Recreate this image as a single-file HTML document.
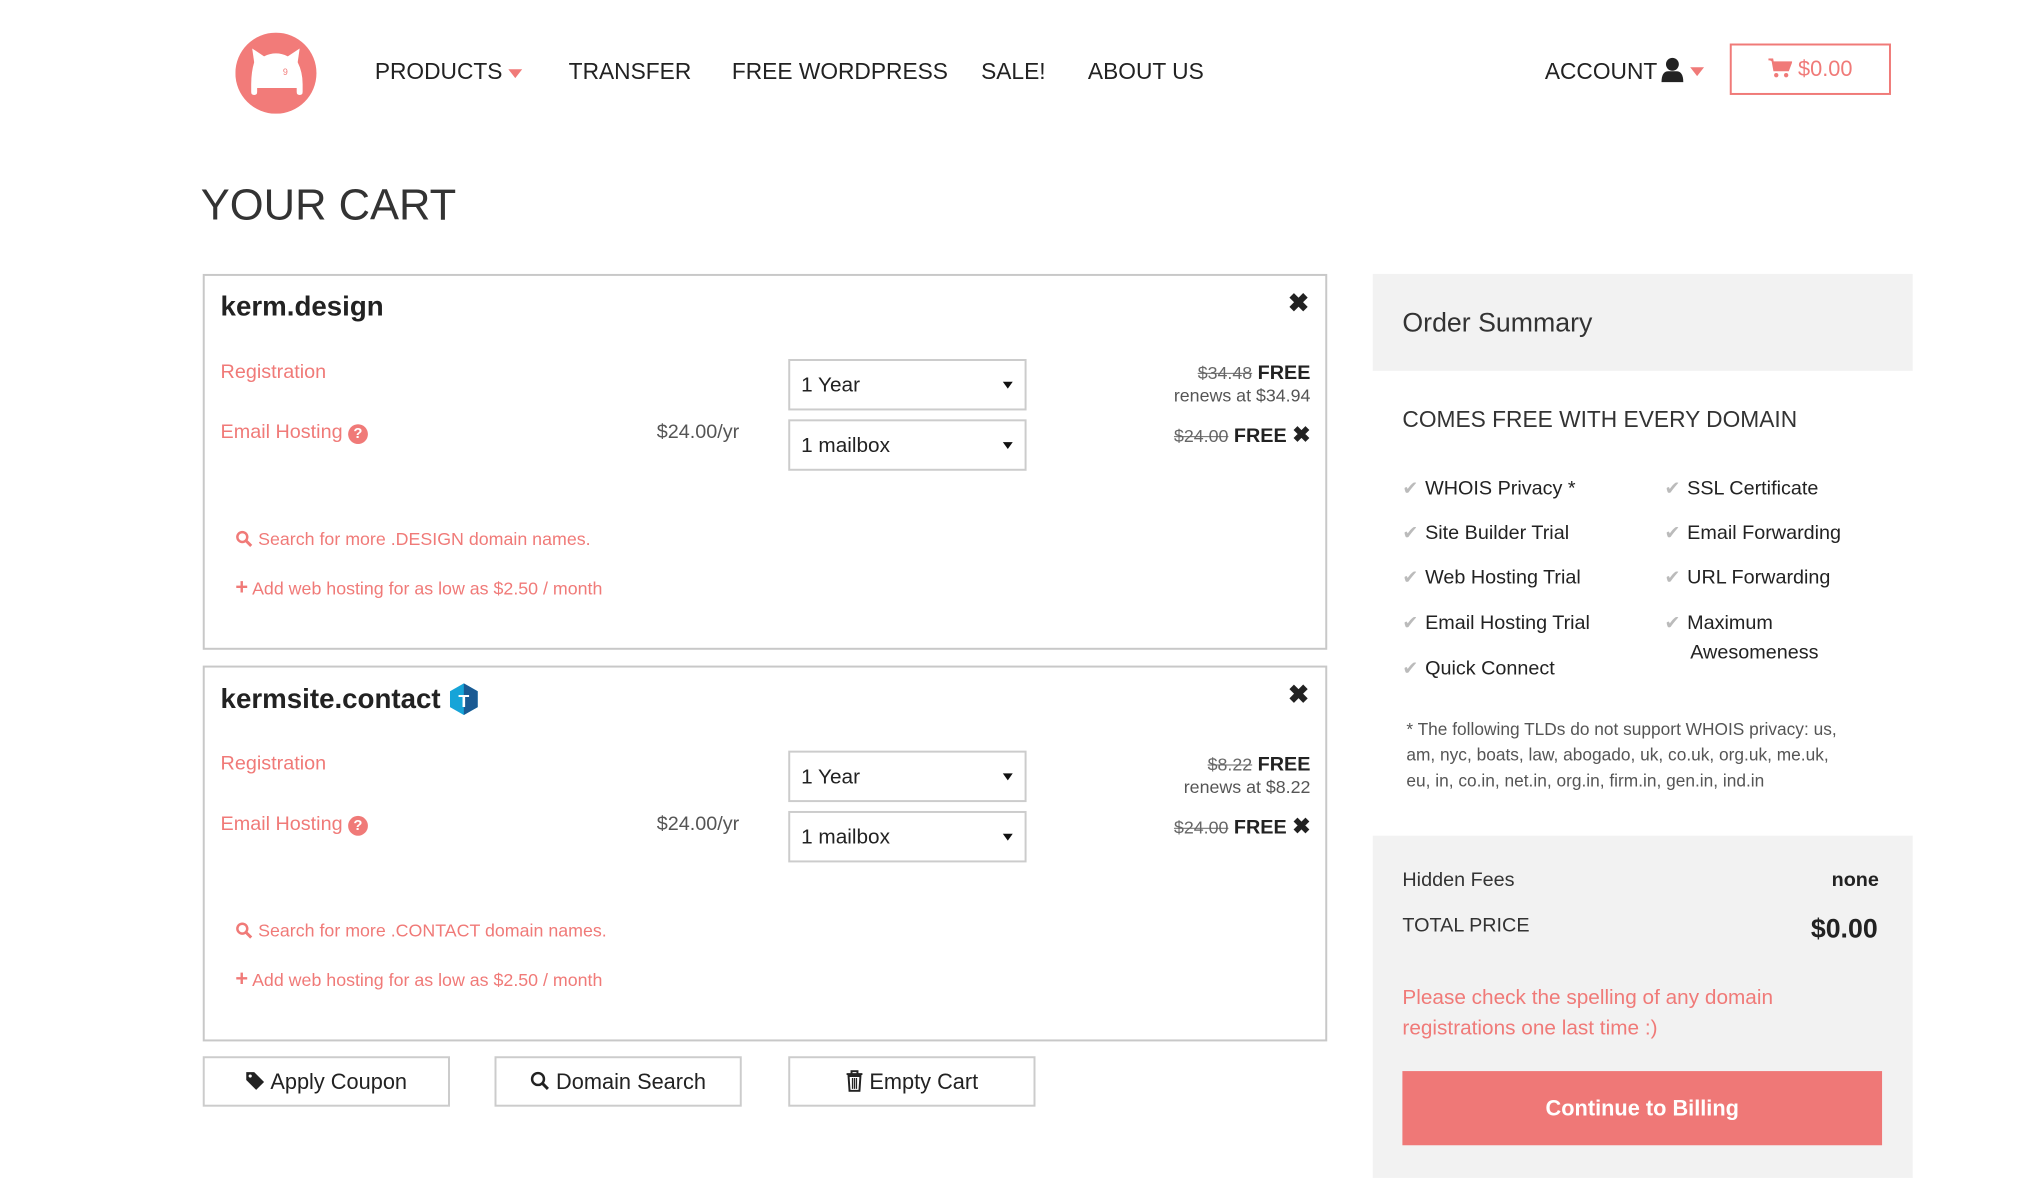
<!DOCTYPE html>
<html><head><meta charset="utf-8">
<style>
*{margin:0;padding:0;box-sizing:border-box}
body{width:2034px;height:1191px;background:#fff;font-family:"Liberation Sans",sans-serif;color:#222;position:relative;overflow:hidden}
#w{position:absolute;left:0;top:0;width:2060px;height:1210px;transform:scale(0.989);transform-origin:0 0}
.a{position:absolute;white-space:nowrap}
.nav{font-size:23px;color:#222;top:59px}
.pink{color:#f07a78}
.card{position:absolute;left:205px;width:1137px;border:2px solid #c8c8c8;background:#fff}
.sel{position:absolute;width:241px;height:52px;border:2px solid #ccc;font-size:21px;padding:13px 11px;color:#222}
.sel:after{content:"";position:absolute;right:12px;top:21px;border:5px solid transparent;border-top:7px solid #111}
.lbl{font-size:20px}
.btn{position:absolute;top:1068px;height:51px;width:250px;border:2px solid #ccc;font-size:22px;text-align:center;line-height:47px;color:#222}
.chk{font-size:20px;color:#222}
.chk:before{content:"✔";color:#bbb;margin-right:7px;font-size:19px}
</style></head><body><div id="w">
<svg class="a" style="left:238px;top:33px" width="82" height="82" viewBox="0 0 82 82">
<circle cx="41" cy="41" r="41" fill="#f27b79"/>
<path d="M19 30 L17 16 L29 24 Q41 18 53 24 L65 16 L63 30 Q68 40 68 52 L68 60 Q68 63 65 63 Q62 63 62 60 L62 56 L22 56 L22 60 Q22 63 19 63 Q16 63 16 60 L16 52 Q16 40 19 30 Z" fill="#fff"/>
<text x="48" y="43" font-size="9" fill="#f27b79" font-family="Liberation Sans">9</text>
</svg>
<div class="a nav" style="left:379px">PRODUCTS <span style="display:inline-block;border:7px solid transparent;border-top:9px solid #f07a78;vertical-align:middle;margin-top:8px"></span></div>
<div class="a nav" style="left:575px">TRANSFER</div>
<div class="a nav" style="left:740px">FREE WORDPRESS</div>
<div class="a nav" style="left:992px">SALE!</div>
<div class="a nav" style="left:1100px">ABOUT US</div>
<div class="a nav" style="left:1562px">ACCOUNT</div>
<svg class="a" style="left:1679px;top:58px" width="24" height="26" viewBox="0 0 24 26"><circle cx="12" cy="7" r="6.5" fill="#222"/><path d="M1 25 Q1 14 8 14 L16 14 Q23 14 23 25 Z" fill="#222"/></svg>
<div class="a" style="left:1709px;top:68px;border:7px solid transparent;border-top:9px solid #f07a78"></div>
<div class="a" style="left:1749px;top:44px;width:163px;height:52px;border:2px solid #f07a78;color:#f07a78;font-size:22px;text-align:center;line-height:48px">
<svg width="24" height="20" viewBox="0 0 24 20" style="vertical-align:-2px"><path d="M0 1 L4 1 L6 12 L20 12 L23 4 L5 4" fill="#f07a78" stroke="#f07a78" stroke-width="2"/><circle cx="8" cy="17" r="2.2" fill="#f07a78"/><circle cx="18" cy="17" r="2.2" fill="#f07a78"/></svg> $0.00</div>

<div class="a" style="left:203px;top:183px;font-size:44px;color:#333">YOUR CART</div>

<div class="card" style="top:277px;height:380px">
 <div class="a" style="left:16px;top:15px;font-size:28px;font-weight:bold;color:#222">kerm.design</div>
 <div class="a" style="right:16px;top:12px;font-size:26px;font-weight:bold">✖</div>
 <div class="a lbl pink" style="left:16px;top:86px">Registration</div>
 <div class="a lbl pink" style="left:16px;top:147px">Email Hosting <span style="display:inline-block;width:20px;height:20px;border-radius:50%;background:#f07a78;color:#fff;font-size:15px;text-align:center;line-height:20px;font-weight:bold">?</span></div>
 <div class="a lbl" style="left:457px;top:147px;color:#555">$24.00/yr</div>
 <div class="sel" style="left:590px;top:84px">1 Year</div>
 <div class="sel" style="left:590px;top:145px">1 mailbox</div>
 <div class="a" style="right:15px;top:87px;font-size:20px;text-align:right"><s style="color:#666;font-size:18px">$34.48</s> <b>FREE</b></div>
 <div class="a" style="right:15px;top:111px;font-size:18px;color:#555">renews at $34.94</div>
 <div class="a" style="right:15px;top:148px;font-size:20px"><s style="color:#666;font-size:18px">$24.00</s> <b>FREE</b> <b style="font-size:22px">✖</b></div>
 <div class="a pink" style="left:31px;top:256px;font-size:18px"><svg width="18" height="18" viewBox="0 0 18 18" style="vertical-align:-3px"><circle cx="7" cy="7" r="5" fill="none" stroke="#f07a78" stroke-width="2.5"/><path d="M11 11 L16 16" stroke="#f07a78" stroke-width="3"/></svg> Search for more .DESIGN domain names.</div>
 <div class="a pink" style="left:31px;top:302px;font-size:18px"><b style="font-size:22px">+</b> Add web hosting for as low as $2.50 / month</div>
</div>

<div class="card" style="top:673px;height:380px">
 <div class="a" style="left:16px;top:15px;font-size:28px;font-weight:bold;color:#222">kermsite.contact
 <svg width="32" height="34" viewBox="0 0 32 34" style="vertical-align:-8px"><path d="M16 1 L30 9 L30 25 L16 33 L2 25 L2 9 Z" fill="#16a4d8"/><path d="M16 1 L30 9 L30 25 L16 33 Z" fill="#1a5a93"/><text x="16" y="25" font-size="18" fill="#fff" text-anchor="middle" font-weight="bold" font-family="Liberation Sans">T</text></svg></div>
 <div class="a" style="right:16px;top:12px;font-size:26px;font-weight:bold">✖</div>
 <div class="a lbl pink" style="left:16px;top:86px">Registration</div>
 <div class="a lbl pink" style="left:16px;top:147px">Email Hosting <span style="display:inline-block;width:20px;height:20px;border-radius:50%;background:#f07a78;color:#fff;font-size:15px;text-align:center;line-height:20px;font-weight:bold">?</span></div>
 <div class="a lbl" style="left:457px;top:147px;color:#555">$24.00/yr</div>
 <div class="sel" style="left:590px;top:84px">1 Year</div>
 <div class="sel" style="left:590px;top:145px">1 mailbox</div>
 <div class="a" style="right:15px;top:87px;font-size:20px"><s style="color:#666;font-size:18px">$8.22</s> <b>FREE</b></div>
 <div class="a" style="right:15px;top:111px;font-size:18px;color:#555">renews at $8.22</div>
 <div class="a" style="right:15px;top:148px;font-size:20px"><s style="color:#666;font-size:18px">$24.00</s> <b>FREE</b> <b style="font-size:22px">✖</b></div>
 <div class="a pink" style="left:31px;top:256px;font-size:18px"><svg width="18" height="18" viewBox="0 0 18 18" style="vertical-align:-3px"><circle cx="7" cy="7" r="5" fill="none" stroke="#f07a78" stroke-width="2.5"/><path d="M11 11 L16 16" stroke="#f07a78" stroke-width="3"/></svg> Search for more .CONTACT domain names.</div>
 <div class="a pink" style="left:31px;top:302px;font-size:18px"><b style="font-size:22px">+</b> Add web hosting for as low as $2.50 / month</div>
</div>

<div class="btn" style="left:205px"><svg width="20" height="20" viewBox="0 0 20 20" style="vertical-align:-2px"><path d="M1 1 L9 1 L19 11 L11 19 L1 9 Z" fill="#222"/><circle cx="5" cy="5" r="1.6" fill="#fff"/></svg> Apply Coupon</div>
<div class="btn" style="left:500px"><svg width="20" height="20" viewBox="0 0 20 20" style="vertical-align:-2px"><circle cx="8" cy="8" r="6" fill="none" stroke="#222" stroke-width="2.5"/><path d="M12.5 12.5 L18 18" stroke="#222" stroke-width="3"/></svg> Domain Search</div>
<div class="btn" style="left:797px"><svg width="18" height="22" viewBox="0 0 18 22" style="vertical-align:-3px"><path d="M1 4 L17 4 M6 4 L6 1 L12 1 L12 4" stroke="#222" stroke-width="2" fill="none"/><path d="M3 6 L15 6 L14 21 L4 21 Z" fill="none" stroke="#222" stroke-width="2"/><path d="M7 8 V19 M9 8 V19 M11 8 V19" stroke="#222" stroke-width="1.3"/></svg> Empty Cart</div>

<div class="a" style="left:1388px;top:277px;width:546px;height:98px;background:#f2f2f2"></div>
<div class="a" style="left:1418px;top:311px;font-size:27px;color:#333">Order Summary</div>
<div class="a" style="left:1418px;top:411px;font-size:23px;color:#333">COMES FREE WITH EVERY DOMAIN</div>
<div class="a chk" style="left:1418px;top:483px">WHOIS Privacy *</div>
<div class="a chk" style="left:1418px;top:528px">Site Builder Trial</div>
<div class="a chk" style="left:1418px;top:573px">Web Hosting Trial</div>
<div class="a chk" style="left:1418px;top:619px">Email Hosting Trial</div>
<div class="a chk" style="left:1418px;top:665px">Quick Connect</div>
<div class="a chk" style="left:1683px;top:483px">SSL Certificate</div>
<div class="a chk" style="left:1683px;top:528px">Email Forwarding</div>
<div class="a chk" style="left:1683px;top:573px">URL Forwarding</div>
<div class="a chk" style="left:1683px;top:619px">Maximum</div>
<div class="a" style="left:1709px;top:649px;font-size:20px">Awesomeness</div>
<div class="a" style="left:1422px;top:724px;font-size:17.5px;color:#555;line-height:26px">* The following TLDs do not support WHOIS privacy: us,<br>am, nyc, boats, law, abogado, uk, co.uk, org.uk, me.uk,<br>eu, in, co.in, net.in, org.in, firm.in, gen.in, ind.in</div>
<div class="a" style="left:1388px;top:845px;width:546px;height:346px;background:#f2f2f2"></div>
<div class="a" style="left:1418px;top:879px;font-size:20px;color:#333">Hidden Fees</div>
<div class="a" style="left:1852px;top:879px;font-size:20px;font-weight:bold">none</div>
<div class="a" style="left:1418px;top:925px;font-size:20px;color:#333">TOTAL PRICE</div>
<div class="a" style="left:1831px;top:924px;font-size:27px;font-weight:bold">$0.00</div>
<div class="a pink" style="left:1418px;top:993px;font-size:21px;line-height:31px">Please check the spelling of any domain<br>registrations one last time :)</div>
<div class="a" style="left:1418px;top:1083px;width:485px;height:75px;background:#ef7877;color:#fff;font-size:22px;font-weight:bold;text-align:center;line-height:75px">Continue to Billing</div>
</div></body></html>
